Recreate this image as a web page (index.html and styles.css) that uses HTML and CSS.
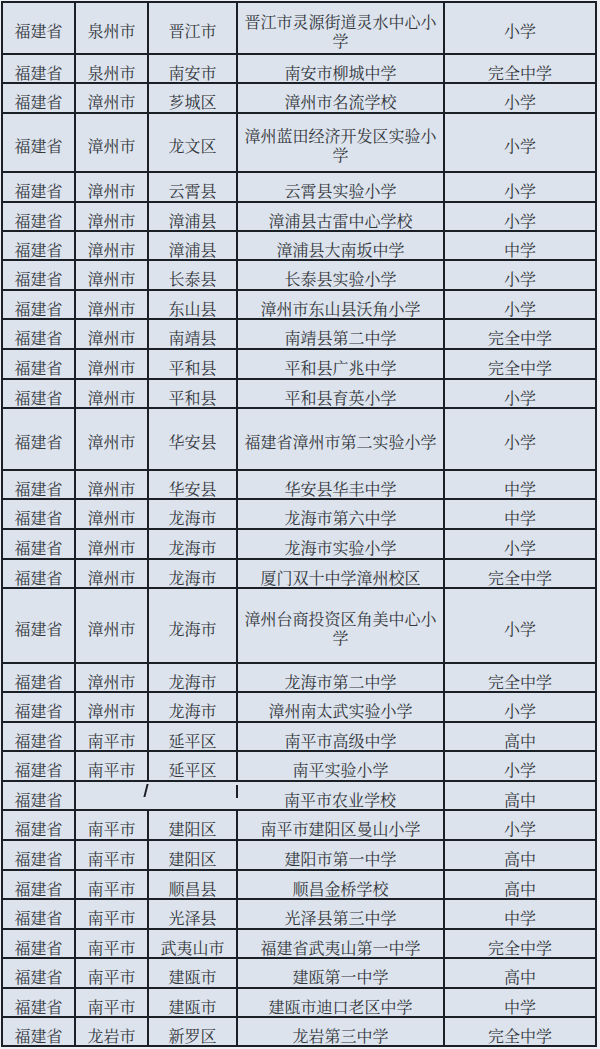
FILE: index.html
```html
<!DOCTYPE html>
<html lang="zh-CN">
<head>
<meta charset="utf-8">
<title>学校名单</title>
<link rel="stylesheet" href="styles.css">
</head>
<body>
<table class="list">
  <colgroup>
    <col class="c1"><col class="c2"><col class="c3"><col class="c4"><col class="c5">
  </colgroup>
  <tbody>
    <tr class="h52"><td>福建省</td><td>泉州市</td><td>晋江市</td><td>晋江市灵源街道灵水中心小学</td><td>小学</td></tr>
    <tr class="h29"><td>福建省</td><td>泉州市</td><td>南安市</td><td>南安市柳城中学</td><td>完全中学</td></tr>
    <tr class="h30"><td>福建省</td><td>漳州市</td><td>芗城区</td><td>漳州市名流学校</td><td>小学</td></tr>
    <tr class="h59"><td>福建省</td><td>漳州市</td><td>龙文区</td><td>漳州蓝田经济开发区实验小学</td><td>小学</td></tr>
    <tr class="h30"><td>福建省</td><td>漳州市</td><td>云霄县</td><td>云霄县实验小学</td><td>小学</td></tr>
    <tr class="h29"><td>福建省</td><td>漳州市</td><td>漳浦县</td><td>漳浦县古雷中心学校</td><td>小学</td></tr>
    <tr class="h29"><td>福建省</td><td>漳州市</td><td>漳浦县</td><td>漳浦县大南坂中学</td><td>中学</td></tr>
    <tr class="h30"><td>福建省</td><td>漳州市</td><td>长泰县</td><td>长泰县实验小学</td><td>小学</td></tr>
    <tr class="h29"><td>福建省</td><td>漳州市</td><td>东山县</td><td>漳州市东山县沃角小学</td><td>小学</td></tr>
    <tr class="h30"><td>福建省</td><td>漳州市</td><td>南靖县</td><td>南靖县第二中学</td><td>完全中学</td></tr>
    <tr class="h30"><td>福建省</td><td>漳州市</td><td>平和县</td><td>平和县广兆中学</td><td>完全中学</td></tr>
    <tr class="h29"><td>福建省</td><td>漳州市</td><td>平和县</td><td>平和县育英小学</td><td>小学</td></tr>
    <tr class="h62"><td>福建省</td><td>漳州市</td><td>华安县</td><td>福建省漳州市第二实验小学</td><td>小学</td></tr>
    <tr class="h29"><td>福建省</td><td>漳州市</td><td>华安县</td><td>华安县华丰中学</td><td>中学</td></tr>
    <tr class="h30"><td>福建省</td><td>漳州市</td><td>龙海市</td><td>龙海市第六中学</td><td>中学</td></tr>
    <tr class="h30"><td>福建省</td><td>漳州市</td><td>龙海市</td><td>龙海市实验小学</td><td>小学</td></tr>
    <tr class="h29"><td>福建省</td><td>漳州市</td><td>龙海市</td><td>厦门双十中学漳州校区</td><td>完全中学</td></tr>
    <tr class="h75"><td>福建省</td><td>漳州市</td><td>龙海市</td><td>漳州台商投资区角美中心小学</td><td>小学</td></tr>
    <tr class="h29"><td>福建省</td><td>漳州市</td><td>龙海市</td><td>龙海市第二中学</td><td>完全中学</td></tr>
    <tr class="h30"><td>福建省</td><td>漳州市</td><td>龙海市</td><td>漳州南太武实验小学</td><td>小学</td></tr>
    <tr class="h29"><td>福建省</td><td>南平市</td><td>延平区</td><td>南平市高级中学</td><td>高中</td></tr>
    <tr class="h30"><td>福建省</td><td>南平市</td><td>延平区</td><td>南平实验小学</td><td>小学</td></tr>
    <tr class="h29"><td>福建省</td><td class="blank" colspan="2"></td><td class="open">南平市农业学校</td><td>高中</td></tr>
    <tr class="h30"><td>福建省</td><td>南平市</td><td>建阳区</td><td>南平市建阳区曼山小学</td><td>小学</td></tr>
    <tr class="h30"><td>福建省</td><td>南平市</td><td>建阳区</td><td>建阳市第一中学</td><td>高中</td></tr>
    <tr class="h29"><td>福建省</td><td>南平市</td><td>顺昌县</td><td>顺昌金桥学校</td><td>高中</td></tr>
    <tr class="h30"><td>福建省</td><td>南平市</td><td>光泽县</td><td>光泽县第三中学</td><td>中学</td></tr>
    <tr class="h29"><td>福建省</td><td>南平市</td><td>武夷山市</td><td>福建省武夷山第一中学</td><td>完全中学</td></tr>
    <tr class="h30"><td>福建省</td><td>南平市</td><td>建瓯市</td><td>建瓯第一中学</td><td>高中</td></tr>
    <tr class="h29"><td>福建省</td><td>南平市</td><td>建瓯市</td><td>建瓯市迪口老区中学</td><td>中学</td></tr>
    <tr class="h29"><td>福建省</td><td>龙岩市</td><td>新罗区</td><td>龙岩第三中学</td><td>完全中学</td></tr>
  </tbody>
</table>
</body>
</html>
```

FILE: styles.css
```css
html, body {
  margin: 0;
  padding: 0;
  background: #eceff4;
}

body {
  padding: 1px 0 0 1px;
  font-family: "Noto Serif CJK SC", "Noto Sans CJK SC", "Noto Sans", sans-serif;
}

.list {
  border-collapse: collapse;
  table-layout: fixed;
  width: 596px;
  background: #dce3ed;
  color: #33363b;
  font-size: 16px;
}

.c1 { width: 73px; }
.c2 { width: 73px; }
.c3 { width: 89px; }
.c4 { width: 207px; }
.c5 { width: 152px; }

.list td {
  border: 2px solid #1b1f26;
  text-align: center;
  vertical-align: middle;
  padding: 5px 4px 0;
  line-height: 19px;
}

.h29 { height: 29px; }
.h30 { height: 30px; }
.h52 { height: 52px; }
.h59 { height: 59px; }
.h62 { height: 62px; }
.h75 { height: 75px; }

.h29 td,
.h30 td {
  vertical-align: top;
  padding-top: 10px;
  line-height: 16px;
}

.list td.blank {
  position: relative;
}

.list td.blank::before {
  content: "";
  position: absolute;
  left: 69px;
  top: 2px;
  width: 2px;
  height: 13px;
  background: #1b1f26;
  transform: skewX(-14deg);
}

.list td.blank::after {
  content: "";
  position: absolute;
  right: -1px;
  top: 3px;
  width: 2px;
  height: 13px;
  background: #1b1f26;
}

.list td.open {
  border-left: hidden;
}
```
